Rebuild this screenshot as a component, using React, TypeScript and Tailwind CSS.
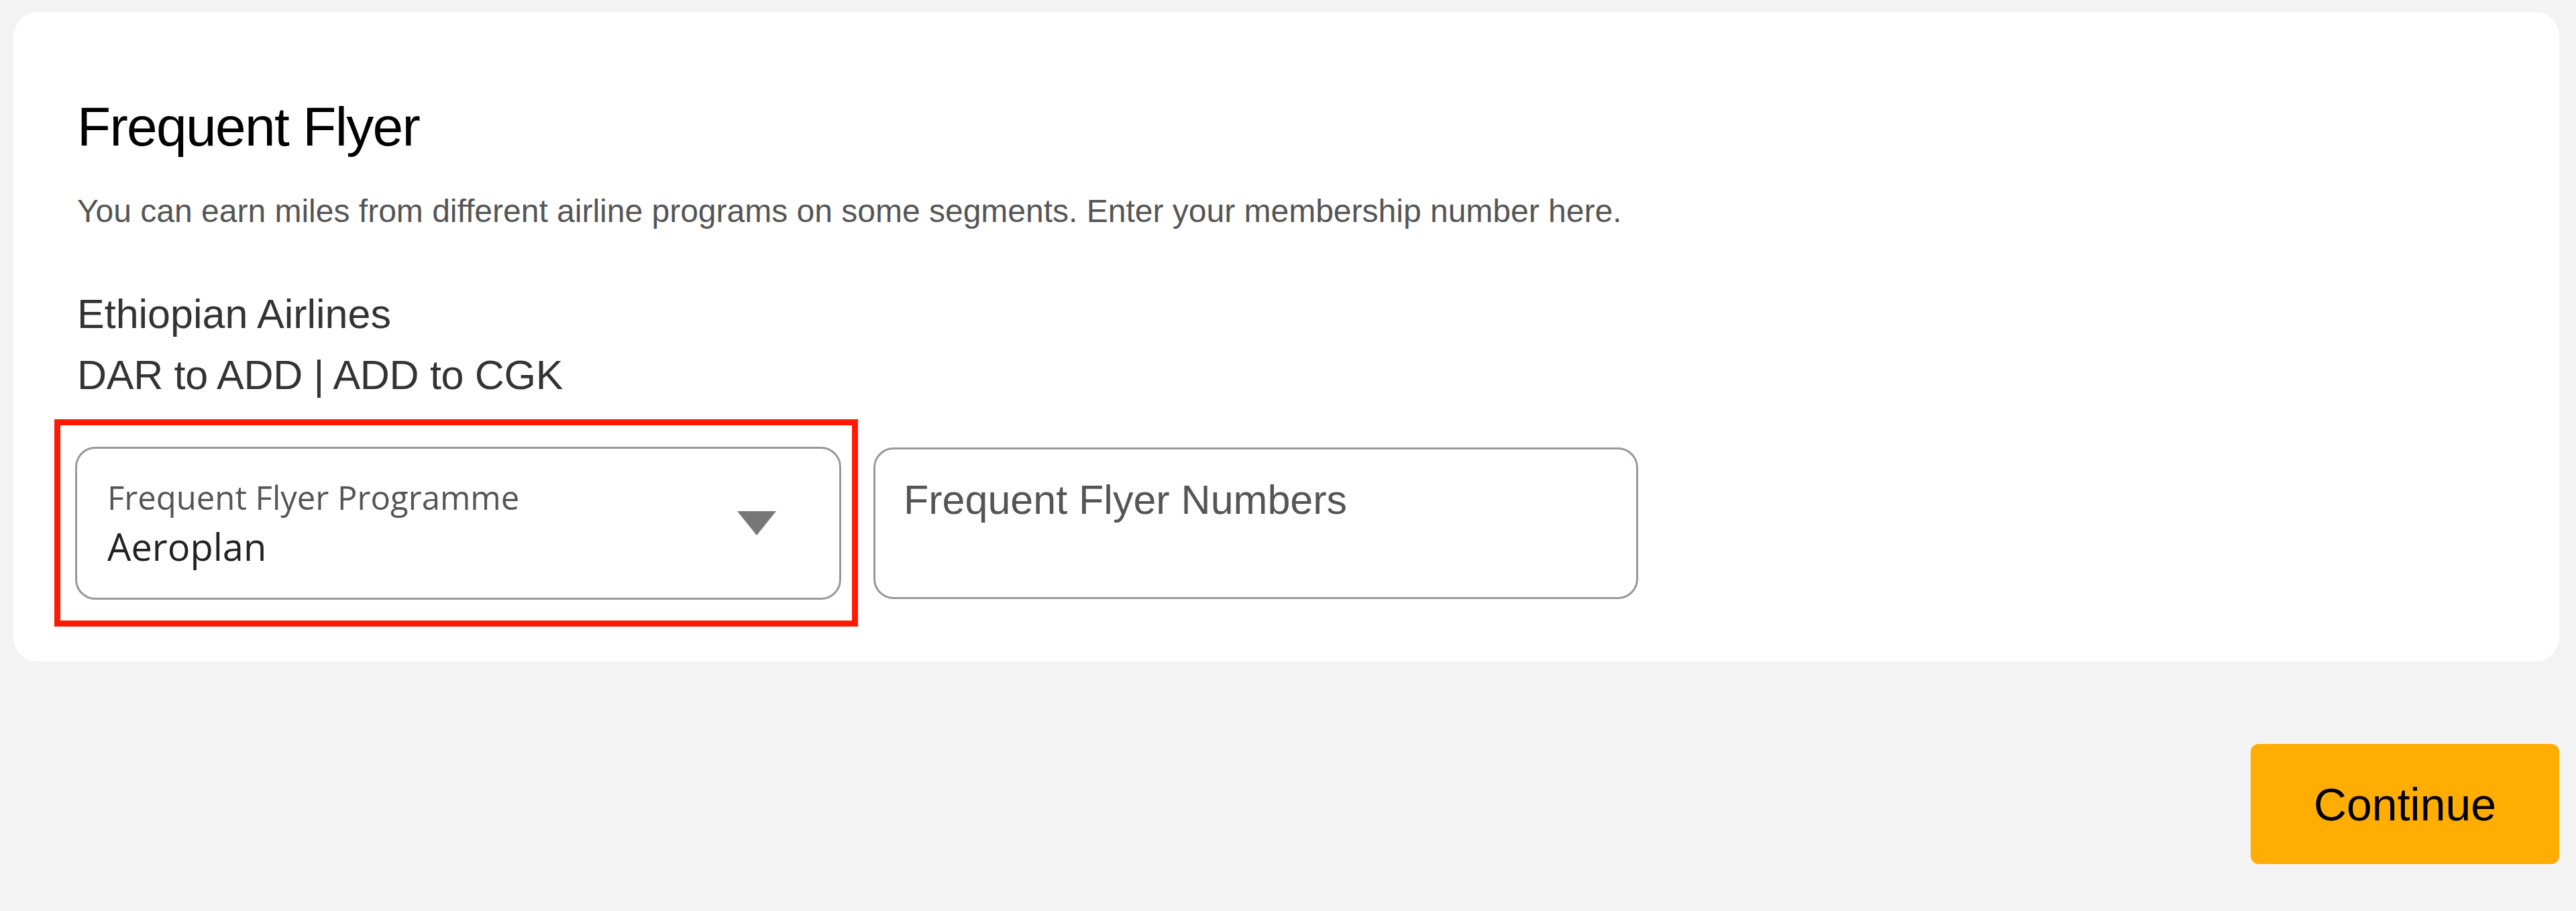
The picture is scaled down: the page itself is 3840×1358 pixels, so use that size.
export default function App() {
    return (
        <div className="min-h-screen w-full bg-[#f3f3f3] pt-[18px] pl-[20px] pr-[25px] font-['Liberation_Sans',Arial,sans-serif]">
            {/* Card */}
            <section className="bg-white rounded-[36px] pl-[95px] pt-[122px] pb-[52px]">
                <h2 className="text-[82px] leading-[1.2] tracking-[-0.02em] text-black">Frequent Flyer</h2>
                <p className="mt-[41px] text-[48px] leading-[1.5] text-[#555]">
                    You can earn miles from different airline programs on some segments. Enter your membership number here.
                </p>
                <div className="mt-[72px] text-[61px] leading-[91px] text-[#333]">
                    <div>Ethiopian Airlines</div>
                    <div className="tracking-[-0.005em]">DAR to ADD | ADD to CGK</div>
                </div>

                {/* Inputs */}
                <div className="mt-[20px] flex items-center">
                    <div className="-ml-[34px] border-[9px] border-[#ff1a00] pl-[22px] pt-[32px] pr-[16px] pb-[31px]">
                        <button className="w-[1142px] h-[228px] border-[3px] border-[#999] rounded-[30px] bg-white flex items-center justify-between pl-[45px] pr-[94px] text-left">
                            <span className="flex flex-col gap-[10px] font-['Open_Sans',sans-serif]">
                                <span className="text-[49px] leading-[1.2] text-[#555]">Frequent Flyer Programme</span>
                                <span className="text-[56px] leading-[1.2] text-[#222]">Aeroplan</span>
                            </span>
                            <svg width="58" height="36" viewBox="0 0 58 36">
                                <path d="M0 0 H58 L29 36 Z" fill="#777" />
                            </svg>
                        </button>
                    </div>
                    <div className="ml-[23px] w-[1140px] h-[226px] border-[3px] border-[#999] rounded-[30px] pl-[42px] pt-[39px]">
                        <input
                            className="w-full bg-transparent outline-none text-[61px] leading-[1.2] text-[#555] placeholder:text-[#555]"
                            placeholder="Frequent Flyer Numbers"
                        />
                    </div>
                </div>
            </section>

            {/* Footer action */}
            <div className="flex justify-end mt-[123px]">
                <button className="w-[460px] h-[179px] rounded-[12px] bg-[#ffad00] text-[68px] text-black">
                    Continue
                </button>
            </div>
        </div>
    )
}
